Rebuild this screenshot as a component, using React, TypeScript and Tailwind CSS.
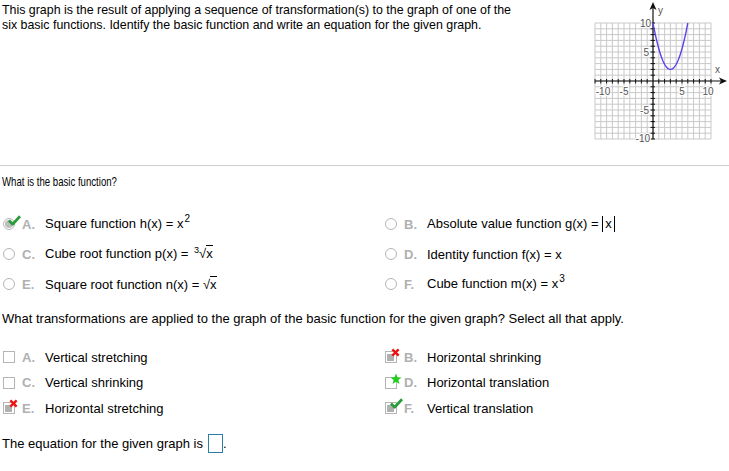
import type { ReactNode } from "react";

const U = 5.8;

function Graph() {
  // origin of the plot inside the svg
  const ox = 68;
  const oy = 81;
  const lines = [];
  for (let i = -10; i <= 10; i++) {
    lines.push(<line key={"v" + i} x1={ox + i * U} y1={oy - 10 * U} x2={ox + i * U} y2={oy + 10 * U} stroke="#c9c9c9" strokeWidth="1" />);
    lines.push(<line key={"h" + i} x1={ox - 10 * U} y1={oy + i * U} x2={ox + 10 * U} y2={oy + i * U} stroke="#c9c9c9" strokeWidth="1" />);
  }
  const ticks = [];
  for (let i = -10; i <= 10; i++) {
    if (i === 0) continue;
    ticks.push(<line key={"tx" + i} x1={ox + i * U} y1={oy - 2} x2={ox + i * U} y2={oy + 2.5} stroke="#111" strokeWidth="1" />);
    ticks.push(<line key={"ty" + i} x1={ox - 2.5} y1={oy + i * U} x2={ox + 2} y2={oy + i * U} stroke="#111" strokeWidth="1" />);
  }
  let d = "";
  for (let x = 0; x <= 6.01; x += 0.1) {
    const y = (8 / 9) * (x - 3) * (x - 3) + 2;
    d += (d ? " L" : "M") + (ox + x * U).toFixed(2) + " " + (oy - y * U).toFixed(2);
  }
  const lbl = { fontSize: 10, fill: "#555", fontFamily: "'Liberation Sans', Arial, sans-serif", stroke: "#fff", strokeWidth: 2, paintOrder: "stroke" as const };
  return (
    <svg width="144" height="160" viewBox="0 0 144 160" className="shrink-0">
      {lines}
      <line x1={ox} y1={oy + 10 * U} x2={ox} y2={6} stroke="#111" strokeWidth="1.2" />
      <line x1={ox - 10 * U} y1={oy} x2={138} y2={oy} stroke="#111" strokeWidth="1.2" />
      <polygon points={`${ox},2 ${ox - 3.5},10 ${ox},8 ${ox + 3.5},10`} fill="#111" />
      <polygon points={`142,${oy} 134,${oy - 3.5} 136,${oy} 134,${oy + 3.5}`} fill="#111" />
      {ticks}
      <path d={d} fill="none" stroke="#5a3ff0" strokeWidth="1.4" />
      <text x={ox - 2} y={oy - 10 * U + 4} textAnchor="end" {...lbl}>10</text>
      <text x={ox - 4} y={oy - 5 * U + 4} textAnchor="end" {...lbl}>5</text>
      <text x={ox - 4} y={oy + 5 * U + 4} textAnchor="end" {...lbl}>-5</text>
      <text x={ox - 3} y={oy + 10 * U + 3} textAnchor="end" {...lbl}>-10</text>
      <text x={ox - 10 * U + 8} y={oy + 14} textAnchor="middle" {...lbl}>-10</text>
      <text x={ox - 5 * U} y={oy + 14} textAnchor="middle" {...lbl}>-5</text>
      <text x={ox + 5 * U} y={oy + 14} textAnchor="middle" {...lbl}>5</text>
      <text x={ox + 10 * U - 3} y={oy + 14} textAnchor="middle" {...lbl}>10</text>
      <text x={ox + 5} y={14} {...lbl}>y</text>
      <text x={130} y={73} {...lbl}>x</text>
    </svg>
  );
}

function GreenCheck({ className }: { className: string }) {
  return (
    <svg viewBox="0 0 14 11" className={className}>
      <path d="M1 5.5 L5 9.5 L13 1" fill="none" stroke="#2a9d3a" strokeWidth="3" strokeLinejoin="round" />
    </svg>
  );
}

function RedX({ className }: { className: string }) {
  return (
    <svg viewBox="0 0 10 10" className={className}>
      <path d="M1.5 1.5 L8.5 8.5 M8.5 1.5 L1.5 8.5" stroke="#ee1111" strokeWidth="2.6" />
    </svg>
  );
}

function Star({ className }: { className: string }) {
  return (
    <svg viewBox="0 0 20 20" className={className}>
      <polygon points="10,1 12.6,7.2 19.2,7.5 14,11.7 15.8,18.2 10,14.5 4.2,18.2 6,11.7 0.8,7.5 7.4,7.2" fill="#22cc22" />
    </svg>
  );
}

function Radio({ selected }: { selected?: boolean }) {
  return (
    <span className="relative flex h-[12px] w-[12px] shrink-0 items-center justify-center rounded-full border border-[#b5b5b5] bg-white">
      {selected && <span className="h-[8px] w-[8px] rounded-full bg-[#bdbdbd]" />}
      {selected && <GreenCheck className="absolute -top-[4px] left-[4px] h-[11px] w-[13px]" />}
    </span>
  );
}

function Box({ checked, mark }: { checked?: boolean; mark?: "x" | "star" | "check" }) {
  return (
    <span className="relative flex h-[12px] w-[12px] shrink-0 items-end justify-start border border-[#b5b5b5] bg-white p-[1px]">
      {checked && <span className="h-[7px] w-[7px] bg-[#b0b0b0]" />}
      {mark === "x" && <RedX className="absolute -top-[4px] left-[5px] h-[9px] w-[9px]" />}
      {mark === "star" && <Star className="absolute -top-[5px] left-[4px] h-[12px] w-[12px]" />}
      {mark === "check" && <GreenCheck className="absolute -top-[5px] left-[4px] h-[11px] w-[13px]" />}
    </span>
  );
}

function Item({ icon, letter, children }: { icon: ReactNode; letter: string; children: ReactNode }) {
  return (
    <div className="flex h-[16px] items-center">
      <span className="flex w-[19px] shrink-0">{icon}</span>
      <span className="w-[23px] shrink-0 font-bold text-[#b0b0b0]">{letter}</span>
      <span>{children}</span>
    </div>
  );
}

function Sup({ children }: { children: ReactNode }) {
  return <span className="relative -top-[6px] ml-[1px] text-[10px]">{children}</span>;
}

export default function App() {
  return (
    <div className="h-[471px] w-[729px] overflow-hidden bg-white text-[13px] leading-[15px] text-black" style={{ fontFamily: "'Liberation Sans', Arial, sans-serif" }}>
      <div className="flex h-[166px] justify-between border-b border-[#cfcfcf]">
        <p className="pl-[2px] pt-[3px] text-[12.4px]">
          This graph is the result of applying a sequence of transformation(s) to the graph of one of the
          <br />
          six basic functions. Identify the basic function and write an equation for the given graph.
        </p>
        <Graph />
      </div>

      <p className="mt-[8px] pl-[2px]">
        <span className="inline-block origin-left scale-x-[0.74] scale-y-[1.05]">What is the basic function?</span>
      </p>

      <div className="mt-[27px] grid grid-cols-[382px_1fr] gap-y-[14px] pl-[3px]">
        <Item icon={<Radio selected />} letter="A.">
          Square function h(x) = x<Sup>2</Sup>
        </Item>
        <Item icon={<Radio />} letter="B.">
          Absolute value function g(x) = <span className="inline-block border-x border-black px-[2px] leading-[16px]">x</span>
        </Item>
        <Item icon={<Radio />} letter="C.">
          Cube root function p(x) = <span className="relative -top-[5px] ml-[2px] text-[9px]">3</span>
          <span>√</span>
          <span className="border-t border-black">x</span>
        </Item>
        <Item icon={<Radio />} letter="D.">
          Identity function f(x) = x
        </Item>
        <Item icon={<Radio />} letter="E.">
          Square root function n(x) = √<span className="border-t border-black">x</span>
        </Item>
        <Item icon={<Radio />} letter="F.">
          Cube function m(x) = x<Sup>3</Sup>
        </Item>
      </div>

      <p className="mt-[19px] pl-[2px]">What transformations are applied to the graph of the basic function for the given graph? Select all that apply.</p>

      <div className="mt-[23px] grid grid-cols-[382px_1fr] gap-y-[9.5px] pl-[3px]">
        <Item icon={<Box />} letter="A.">Vertical stretching</Item>
        <Item icon={<Box checked mark="x" />} letter="B.">Horizontal shrinking</Item>
        <Item icon={<Box />} letter="C.">Vertical shrinking</Item>
        <Item icon={<Box mark="star" />} letter="D.">Horizontal translation</Item>
        <Item icon={<Box checked mark="x" />} letter="E.">Horizontal stretching</Item>
        <Item icon={<Box checked mark="check" />} letter="F.">Vertical translation</Item>
      </div>

      <div className="mt-[18px] flex items-center pl-[2px]">
        <span>The equation for the given graph is</span>
        <span className="ml-[5px] h-[19px] w-[15px] border border-[#2a7fa8]" />
        <span>.</span>
      </div>
    </div>
  );
}
